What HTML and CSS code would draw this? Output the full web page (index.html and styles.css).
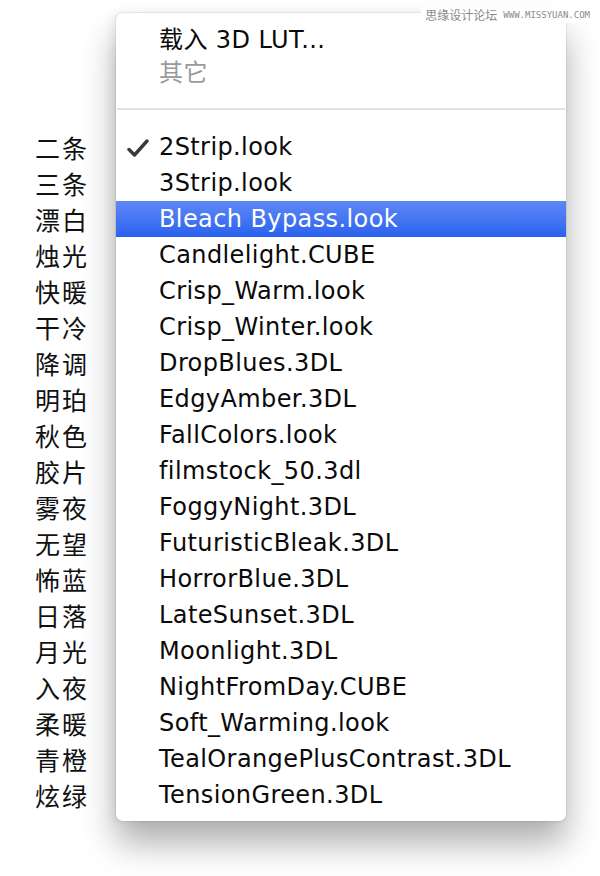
FILE: index.html
```html
<!DOCTYPE html>
<html lang="zh">
<head>
<meta charset="utf-8">
<title>LUT menu</title>
<link rel="stylesheet" href="styles.css">
</head>
<body>
<div class="page">
  <ul class="labels">
    <li>二条</li><li>三条</li><li>漂白</li><li>烛光</li><li>快暖</li><li>干冷</li><li>降调</li><li>明珀</li><li>秋色</li><li>胶片</li><li>雾夜</li><li>无望</li><li>怖蓝</li><li>日落</li><li>月光</li><li>入夜</li><li>柔暖</li><li>青橙</li><li>炫绿</li>
  </ul>
  <div class="menu">
    <div class="head">
      <div class="head-item">载入 3D LUT...</div>
      <div class="head-item disabled">其它</div>
    </div>
    <div class="sep"></div>
    <ul class="items">
      <li class="item"><span class="check"><svg width="22" height="18" viewBox="0 0 22 18"><path d="M2 10.5 L7.5 16 L20 2" fill="none" stroke="#3a3a3a" stroke-width="3.4" stroke-linecap="round" stroke-linejoin="round"/></svg></span>2Strip.look</li>
      <li class="item">3Strip.look</li>
      <li class="item active">Bleach Bypass.look</li>
      <li class="item">Candlelight.CUBE</li>
      <li class="item">Crisp_Warm.look</li>
      <li class="item">Crisp_Winter.look</li>
      <li class="item">DropBlues.3DL</li>
      <li class="item">EdgyAmber.3DL</li>
      <li class="item">FallColors.look</li>
      <li class="item">filmstock_50.3dl</li>
      <li class="item">FoggyNight.3DL</li>
      <li class="item">FuturisticBleak.3DL</li>
      <li class="item">HorrorBlue.3DL</li>
      <li class="item">LateSunset.3DL</li>
      <li class="item">Moonlight.3DL</li>
      <li class="item">NightFromDay.CUBE</li>
      <li class="item">Soft_Warming.look</li>
      <li class="item">TealOrangePlusContrast.3DL</li>
      <li class="item">TensionGreen.3DL</li>
    </ul>
    <div class="watermark"><span class="wm-cn">思缘设计论坛</span><span class="wm-en">WWW.MISSYUAN.COM</span></div>
  </div>
</div>
</body>
</html>
```
FILE: styles.css
```css
html, body {
  margin: 0;
  padding: 0;
  background: #ffffff;
}
body {
  width: 600px;
  height: 876px;
  overflow: hidden;
  font-family: "DejaVu Sans", "Noto Sans CJK SC", sans-serif;
  color: #0a0a0a;
}
.page {
  display: flex;
  padding: 13px 0 0 35px;
}
ul {
  list-style: none;
  margin: 0;
  padding: 0;
}
.labels {
  width: 81px;
  margin-top: 117px;
  font-family: "Noto Sans CJK SC", sans-serif;
  font-size: 25px;
  letter-spacing: 2px;
  color: #111;
}
.labels li {
  height: 36px;
  line-height: 34px;
}
.menu {
  position: relative;
  width: 450px;
  padding: 11px 0 8px;
  background: #fff;
  border-radius: 7px;
  box-shadow: 0 0 0 1px rgba(0, 0, 0, 0.06), -4px 0 10px rgba(0, 0, 0, 0.06), 0 22px 34px rgba(0, 0, 0, 0.32);
  font-size: 24px;
  letter-spacing: 0.4px;
}
.head-item {
  height: 33px;
  line-height: 33px;
  padding-left: 43px;
}
.head-item.disabled {
  color: #9a9a9a;
}
.sep {
  height: 2px;
  margin: 18px 1px 19px;
  background: #e2e2e2;
}
.item {
  position: relative;
  height: 36px;
  line-height: 36px;
  padding-left: 43px;
  white-space: nowrap;
}
.item.active {
  color: #fff;
  background: linear-gradient(#6088f5, #2a62ef);
}
.check {
  position: absolute;
  left: 11px;
  top: 10px;
  width: 22px;
  height: 18px;
  display: block;
}
.check svg {
  display: block;
}
.watermark {
  position: absolute;
  top: -6px;
  right: -26px;
  display: flex;
  align-items: center;
  gap: 6px;
  padding: 0 2px 0 4px;
  background: #fff;
  color: #8a8a8a;
  letter-spacing: 0;
}
.wm-cn {
  font-family: "Noto Sans CJK SC", sans-serif;
  font-size: 12px;
  line-height: 16px;
}
.wm-en {
  font-family: "DejaVu Sans Mono", monospace;
  font-size: 9px;
  line-height: 16px;
}
```
